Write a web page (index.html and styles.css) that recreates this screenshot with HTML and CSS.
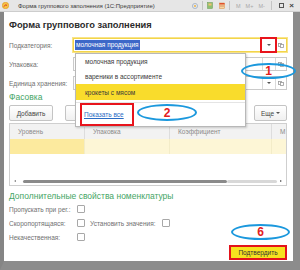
FILE: index.html
```html
<!DOCTYPE html>
<html lang="ru">
<head>
<meta charset="utf-8">
<title>Форма группового заполнения</title>
<link rel="stylesheet" href="styles.css">
</head>
<body>
<div class="win">
  <div class="titlebar">
    <svg class="app-icon" width="7" height="7" viewBox="0 0 7 7"><circle cx="3.5" cy="3.5" r="3.2" fill="#f6c445" stroke="#e0901e" stroke-width="0.6"/><path d="M2 4.6 Q3.5 1.6 5 3.4" fill="none" stroke="#d8261e" stroke-width="0.9"/></svg>
    <span class="title">Форма группового заполнения (1С:Предприятие)</span>
    <div class="tb-tools">
      <svg class="tb-ico" width="6" height="6" viewBox="0 0 6 6"><circle cx="3" cy="3" r="2.6" fill="#dfe6ee" stroke="#8ea0b4" stroke-width="0.6"/><circle cx="3" cy="3" r="1" fill="#f0b040"/></svg>
      <span class="tb-sep"></span>
      <svg class="tb-ico" width="6" height="7" viewBox="0 0 6 7"><rect x="0.5" y="0.5" width="5" height="6" fill="#8fc070" stroke="#6a9a50" stroke-width="0.5"/><rect x="1.5" y="1.5" width="3" height="2" fill="#f3c070"/></svg>
      <svg class="tb-ico cal" width="6" height="7" viewBox="0 0 6 7"><rect x="0.5" y="1" width="5" height="5.5" fill="#f6d6a0" stroke="#d88a40" stroke-width="0.5"/><rect x="0.5" y="1" width="5" height="1.5" fill="#e0502c"/><rect x="1.5" y="3.5" width="1" height="1" fill="#c04020"/><rect x="3.5" y="3.5" width="1" height="1" fill="#c04020"/></svg>
      <span class="tb-sep"></span>
      <span class="tb-m">M</span>
      <span class="tb-m">M+</span>
      <span class="tb-m">M-</span>
      <span class="tb-sep"></span>
      <span class="tb-max"></span>
      <span class="tb-close">×</span>
    </div>
  </div>

  <div class="client">
    <h1 class="heading">Форма группового заполнения</h1>

    <div class="fields">
      <div class="field-row">
        <span class="lbl">Подкатегория:</span>
        <div class="field focused">
          <span class="val"><span class="sel">молочная продукция</span></span>
          <span class="fbtn drop marked"><i class="tri"></i></span>
          <span class="fbtn open"><svg width="6" height="5" viewBox="0 0 6 5"><rect x="0.5" y="0.5" width="3" height="3" fill="none" stroke="#9a9a9a" stroke-width="0.8"/><rect x="2.5" y="1.5" width="3" height="3" fill="#fff" stroke="#9a9a9a" stroke-width="0.8"/></svg></span>
        </div>
      </div>
      <div class="field-row">
        <span class="lbl">Упаковка:</span>
        <div class="field">
          <span class="val"></span>
          <span class="fbtn drop"><i class="tri"></i></span>
          <span class="fbtn open"><svg width="6" height="5" viewBox="0 0 6 5"><rect x="0.5" y="0.5" width="3" height="3" fill="none" stroke="#9a9a9a" stroke-width="0.8"/><rect x="2.5" y="1.5" width="3" height="3" fill="#fff" stroke="#9a9a9a" stroke-width="0.8"/></svg></span>
        </div>
      </div>
      <div class="field-row">
        <span class="lbl">Единица хранения:</span>
        <div class="field">
          <span class="val"></span>
          <span class="fbtn drop"><i class="tri"></i></span>
          <span class="fbtn open"><svg width="6" height="5" viewBox="0 0 6 5"><rect x="0.5" y="0.5" width="3" height="3" fill="none" stroke="#9a9a9a" stroke-width="0.8"/><rect x="2.5" y="1.5" width="3" height="3" fill="#fff" stroke="#9a9a9a" stroke-width="0.8"/></svg></span>
        </div>
      </div>
    </div>

    <div class="group-title">Фасовка</div>

    <div class="toolbar">
      <span class="btn">Добавить</span>
      <span class="btn icon-btn"><svg width="7" height="7" viewBox="0 0 7 7"><rect x="0.5" y="0.5" width="6" height="6" fill="#e8eef6" stroke="#7890b0" stroke-width="0.6"/><path d="M1 3.5H6M3.5 1V6" stroke="#4070b0" stroke-width="0.8"/></svg></span>
      <span class="btn more">Еще <i class="tri small"></i></span>
    </div>

    <div class="table">
      <div class="thead">
        <span class="th">Уровень</span>
        <span class="th">Упаковка</span>
        <span class="th">Коэффициент</span>
        <span class="th">М</span>
      </div>
      <div class="trow">
        <span class="td first"></span>
        <span class="td"></span>
        <span class="td"></span>
        <span class="td"></span>
      </div>
      <div class="tspace"></div>
      <div class="hscroll">
        <i class="arr left"></i>
        <span class="thumb"></span>
        <span class="track"></span>
        <i class="arr right"></i>
      </div>
    </div>

    <div class="group-title extra">Дополнительные свойства номенклатуры</div>

    <div class="checks">
      <div class="check-row"><span class="clbl">Пропускать при рег.:</span><span class="cb"></span></div>
      <div class="check-row"><span class="clbl">Скоропортящаяся:</span><span class="cb"></span><span class="clbl inline">Установить значения:</span><span class="cb"></span></div>
      <div class="check-row"><span class="clbl">Некачественная:</span><span class="cb"></span></div>
    </div>

    <div class="footer">
      <span class="btn-primary">Подтвердить</span>
    </div>
  </div>
</div>

<div class="dropdown">
  <div class="dd-item">молочная продукция</div>
  <div class="dd-item">вареники в ассортименте</div>
  <div class="dd-item active">крокеты с мясом</div>
  <div class="dd-foot"><span class="show-all"><a href="#">Показать все</a></span></div>
</div>

<div class="mark m1"><span>1</span></div>
<div class="mark m2"><span>2</span></div>
<div class="mark m6"><span>6</span></div>
</body>
</html>
```
FILE: styles.css
```css
* { box-sizing: border-box; margin: 0; padding: 0; }
html, body { width: 300px; height: 270px; overflow: hidden; }
body {
  font-family: "Liberation Sans", Arial, sans-serif;
  background: #8c8c8c;
  position: relative;
  color: #333;
}
.win { display: flex; flex-direction: column; height: 270px; }

/* title bar */
.titlebar {
  height: 12px;
  background: #e6e6e6;
  border-bottom: 1px solid #cdcdcd;
  display: flex;
  align-items: center;
  padding-left: 2px;
}
.app-icon { display: block; flex: none; }
.title { font-size: 6px; color: #3a3a3a; margin-left: 9px; white-space: nowrap; }
.tb-tools { margin-left: auto; display: flex; align-items: center; height: 11px; padding-right: 6px; }
.tb-ico { display: block; flex: none; }
.tb-ico.cal { margin-left: 6px; }
.tb-sep { width: 1px; height: 9px; background: #c4c4c4; margin: 0 4px; }
.tb-m { font-size: 5.5px; color: #a8a8a8; margin: 0 2.5px; }
.tb-max { width: 5px; height: 5px; border: 1px solid #555; border-top-width: 1.5px; margin: 0 5px 0 3px; }
.tb-close { font-size: 8px; line-height: 8px; color: #444; font-weight: bold; }

/* client area */
.client {
  flex: 1;
  background: #fff;
  border-left: 4px solid #858585;
  border-right: 7px solid #8c8c8c;
  border-bottom: 9px solid #8c8c8c;
  padding: 0 6px 0 5px;
  display: flex;
  flex-direction: column;
}
.heading {
  margin-top: 7px;
  font-size: 9.3px;
  line-height: 13px;
  font-weight: bold;
  color: #2b2b2b;
}

/* fields */
.fields { margin-top: 6px; display: flex; flex-direction: column; gap: 5px; }
.field-row { display: flex; align-items: center; height: 14px; }
.lbl { width: 64px; font-size: 6.5px; color: #707070; white-space: nowrap; flex: none; }
.field {
  flex: 1;
  height: 14px;
  border: 1px solid #cacaca;
  display: flex;
  align-items: stretch;
  background: #fff;
}
.field.focused { border-color: #f3d54a; box-shadow: 0 0 0 1px #f8e48a; }
.val { flex: 1; display: flex; align-items: center; padding-left: 1px; font-size: 6.5px; }
.sel { background: #3c68c8; color: #fff; padding: 1px 1px; line-height: 8px; }
.fbtn { flex: none; display: flex; align-items: center; justify-content: center; }
.fbtn.drop { width: 13px; border-left: 1px solid #dadada; }
.field.focused .fbtn.drop { border-left-color: transparent; }
.fbtn.open { width: 11px; border-left: 1px solid #dadada; }
.field.focused .fbtn.open { border-left-color: transparent; }
.fbtn.marked { outline: 2px solid #e8141c; outline-offset: 0; }
.tri {
  display: block;
  width: 0; height: 0;
  border-left: 2px solid transparent;
  border-right: 2px solid transparent;
  border-top: 2px solid #555;
}
.tri.small { display: inline-block; vertical-align: middle; margin-left: 2px; }

/* group titles */
.group-title { margin-top: 2px; font-size: 8.5px; line-height: 10px; color: #45a565; }
.group-title.extra { margin-top: 4px; line-height: 12px; }

/* toolbar */
.toolbar { margin-top: 3px; height: 16px; display: flex; align-items: stretch; }
.btn {
  display: flex; align-items: center; justify-content: center;
  border: 1px solid #c4c4c4;
  border-radius: 2px;
  background: linear-gradient(#ffffff, #f0f0f0);
  font-size: 6.5px;
  color: #444;
  padding: 0 5px;
}
.btn:first-child { width: 44px; }
.icon-btn { margin-left: 12px; width: 30px; }
.more { margin-left: auto; width: 33px; }

/* table */
.table {
  margin-top: 2px;
  height: 63px;
  border: 1px solid #cfcfcf;
  display: flex;
  flex-direction: column;
}
.thead, .trow { display: grid; grid-template-columns: 75px 85px 102px 1fr; height: 15px; flex: none; }
.thead { background: #f2f2f2; }
.th {
  font-size: 6.5px; color: #8a8a8a;
  padding-left: 8px;
  display: flex; align-items: center;
  border-right: 1px solid #dddddd;
  white-space: nowrap; overflow: hidden;
}
.th:last-child { border-right: none; }
.td { background: #fdf6d6; border-right: 1px solid #f3ecc8; }
.td.first { background: #fcea9e; }
.td:last-child { border-right: none; }
.tspace { flex: 1; }
.hscroll { height: 7px; display: flex; align-items: center; padding: 0 4px 1px 4px; flex: none; }
.arr { width: 0; height: 0; border-top: 1.5px solid transparent; border-bottom: 1.5px solid transparent; }
.arr.left { border-right: 2px solid #777; margin-right: 7px; }
.arr.right { border-left: 2px solid #555; margin-left: 3px; }
.thumb { width: 204px; height: 3px; background: #8a8a8a; border-radius: 2px; }
.track { flex: 1; height: 3px; background: #d8d8d8; border-radius: 2px; }

/* checkboxes */
.checks { display: flex; flex-direction: column; }
.check-row { height: 14px; display: flex; align-items: center; }
.clbl { width: 68px; font-size: 6.5px; color: #707070; white-space: nowrap; flex: none; }
.clbl.inline { width: 72px; margin-left: 5px; }
.cb { width: 8px; height: 8px; border: 1px solid #a8a8a8; border-radius: 1px; background: #fff; flex: none; }

/* footer */
.footer { margin-top: auto; display: flex; justify-content: flex-end; padding: 0 0 1px 0; }
.btn-primary {
  height: 15px;
  width: 58px;
  border: 2px solid #e3131b;
  background: #f6e21e;
  font-size: 6.5px;
  color: #333;
  display: flex; align-items: center; justify-content: center;
}

/* dropdown overlay */
.dropdown {
  position: absolute;
  left: 75px; top: 53px;
  width: 171px; height: 74px;
  background: #fff;
  border: 1px solid #b8b8b8;
  box-shadow: 1px 1px 2px rgba(0,0,0,0.18);
  display: flex; flex-direction: column;
}
.dd-item { height: 15px; display: flex; align-items: center; padding-left: 9px; font-size: 6.5px; color: #3a3a3a; }
.dd-item.active { background: #f9dc2c; height: 16px; }
.dd-foot { margin-top: 2px; border-top: 1px solid #e4e4e4; flex: 1; padding: 0 0 0 4px; display: flex; align-items: center; }
.show-all {
  width: 54px; height: 23px;
  border: 2px solid #e8141c;
  display: flex; align-items: center;
  padding-left: 2px;
}
.show-all a { font-size: 6.5px; color: #2a6bc4; text-decoration: underline; }

/* annotation marks */
.mark {
  position: absolute;
  border: 2px solid #1b98dd;
  border-radius: 50%;
  display: flex; align-items: center; justify-content: center;
}
.mark span { font-size: 12px; font-weight: bold; color: #e3201c; line-height: 12px; }
.m1 { left: 241px; top: 63px; width: 55px; height: 16px; }
.m2 { left: 137px; top: 104px; width: 60px; height: 17px; }
.m6 { left: 231px; top: 224px; width: 59px; height: 16px; }
```
